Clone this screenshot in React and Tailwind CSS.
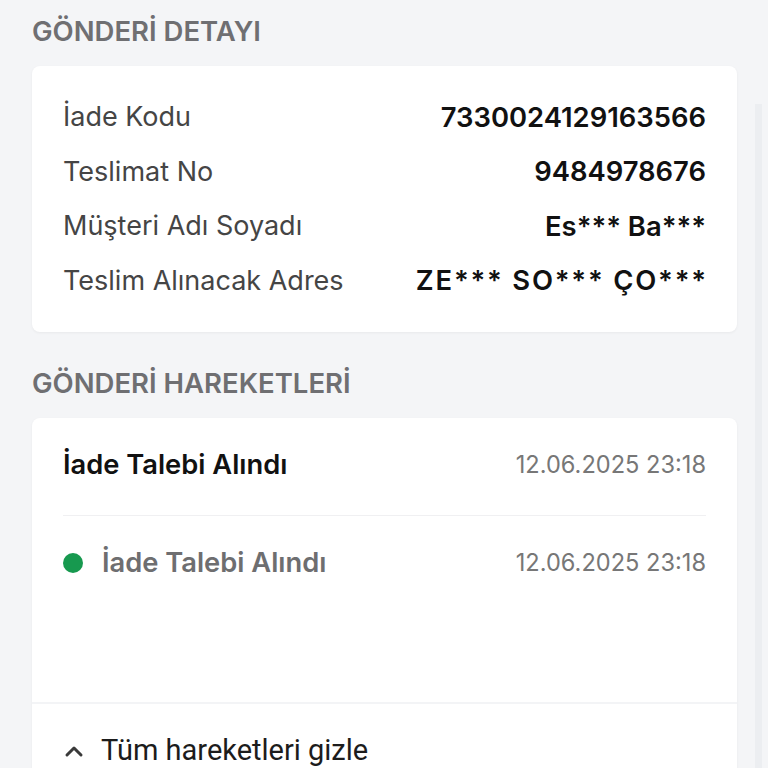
import React from 'react';

const details = [
  { label: 'İade Kodu', value: '7330024129163566' },
  { label: 'Teslimat No', value: '9484978676' },
  { label: 'Müşteri Adı Soyadı', value: 'Es*** Ba***' },
  { label: 'Teslim Alınacak Adres', value: 'ZE*** SO*** ÇO***', wide: true },
];

const App = () => {
  return (
    <div className="relative min-h-[768px] h-[768px] overflow-hidden bg-[#f4f5f7] font-['Inter',sans-serif]">
      <div className="pl-[32px] pr-[31px] pt-[15px]">
        {/* Gönderi detayı */}
        <h2 className="h-[32px] leading-[32px] text-[27.5px] font-semibold text-[#6f6f72]">
          GÖNDERİ DETAYI
        </h2>
        <div className="mt-[19px] bg-white rounded-[8px] shadow-[0_1px_3px_rgba(0,0,0,0.05)] px-[31px] py-[24px]">
          {details.map((row) => (
            <div key={row.label} className="h-[54.5px] flex items-center justify-between">
              <span className="text-[27px] text-[#454545]">{row.label}</span>
              <span className={row.wide ? 'text-[27.4px] font-semibold text-[#111] tracking-[1.8px] -mr-[1.8px]' : 'text-[27.4px] font-semibold text-[#111]'}>
                {row.value}
              </span>
            </div>
          ))}
        </div>

        {/* Gönderi hareketleri */}
        <h2 className="mt-[35px] h-[32px] leading-[32px] text-[27.5px] font-semibold text-[#6f6f72]">
          GÖNDERİ HAREKETLERİ
        </h2>
        <div className="mt-[19px] bg-white rounded-t-[8px] shadow-[0_1px_3px_rgba(0,0,0,0.05)]">
          <div className="px-[31px] pt-[24px]">
            <div className="h-[46px] flex items-center justify-between">
              <span className="text-[27.3px] font-semibold text-[#111]">İade Talebi Alındı</span>
              <span className="text-[23.6px] text-[#777]">12.06.2025 23:18</span>
            </div>
            <div className="mt-[27px] h-px bg-[#f0f0f2]" />
            <div className="mt-[24px] h-[46px] flex items-center justify-between">
              <div className="flex items-center gap-[19px]">
                <span className="w-[20px] h-[20px] rounded-full bg-[#17994f]" />
                <span className="text-[27.3px] font-semibold text-[#6e6e70]">İade Talebi Alındı</span>
              </div>
              <span className="text-[23.6px] text-[#777]">12.06.2025 23:18</span>
            </div>
          </div>
          <div className="h-[116px]" />
          <div className="h-[2px] bg-[#f3f4f6]" />
          <div className="px-[31px] pt-[25px] pb-[20px] flex items-center gap-[17px]">
            <svg width="20" height="14" viewBox="0 0 20 14" className="ml-[1px]">
              <path d="M3 11 L10 4 L17 11" fill="none" stroke="#3a3a3a" strokeWidth="3" strokeLinecap="round" strokeLinejoin="round" />
            </svg>
            <span className="font-['Roboto',sans-serif] text-[29px] text-[#1c1c1c]">Tüm hareketleri gizle</span>
          </div>
        </div>
      </div>

      {/* scrollbar track */}
      <div className="absolute right-[6px] top-[104px] bottom-0 w-[7px] bg-[#eceef1]" />
    </div>
  );
};

export default App;
